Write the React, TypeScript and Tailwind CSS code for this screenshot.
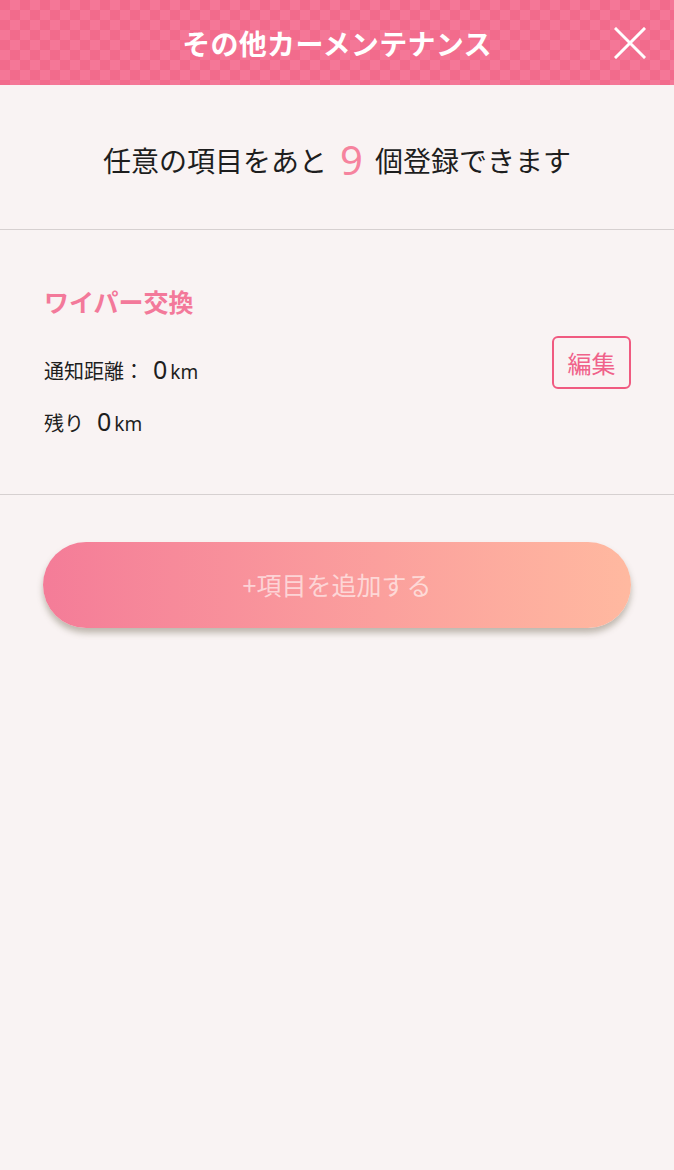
import React from 'react';

const font = "font-['Noto_Sans_CJK_JP','Noto_Sans',sans-serif]";
const latin = "font-['Noto_Sans','Noto_Sans_CJK_JP',sans-serif]";

export default function App() {
  return (
    <div className={`min-h-[1170px] w-full bg-[#f9f3f3] ${font}`}>
      {/* Header */}
      <header className="relative flex h-[85px] items-center justify-center bg-[#f26b8c] bg-[image:repeating-conic-gradient(#f47797_0_25%,#f26b8c_0_50%)] bg-size-[20px_20px]">
        <h1 className="text-[28px] font-bold tracking-[0.3px] text-white">その他カーメンテナンス</h1>
        <button className="absolute right-[28px] top-[27px] h-[32px] w-[32px]">
          <svg viewBox="0 0 32 32" className="h-full w-full" stroke="white" strokeWidth="3" strokeLinecap="square">
            <path d="M2 2 L30 30 M30 2 L2 30" />
          </svg>
        </button>
      </header>

      {/* Remaining count */}
      <section className="flex h-[145px] items-center justify-center border-b border-[#d6d0d0] pt-[6px]">
        <p className="flex items-center text-[28px] text-[#1e1e1e]">
          <span>任意の項目をあと</span>
          <span className={`ml-[13px] mr-[12px] text-[40px] leading-none text-[#f6839e] ${latin}`}>9</span>
          <span>個登録できます</span>
        </p>
      </section>

      {/* Item */}
      <section className="flex h-[265px] items-start justify-between border-b border-[#d6d0d0] pl-[44px] pr-[43px] pt-[56px]">
        <div className="flex flex-col">
          <h2 className="text-[25px] font-bold leading-[30px] text-[#f3799a]">ワイパー交換</h2>
          <div className="mt-[40px] flex items-baseline text-[#1e1e1e]">
            <span className="text-[20px]">通知距離：</span>
            <span className={`ml-[9px] text-[25px] leading-none ${latin}`}>0</span>
            <span className={`ml-[3px] text-[19px] ${latin}`}>km</span>
          </div>
          <div className="mt-[21px] flex items-baseline text-[#1e1e1e]">
            <span className="text-[20px]">残り</span>
            <span className={`ml-[13px] text-[25px] leading-none ${latin}`}>0</span>
            <span className={`ml-[3px] text-[19px] ${latin}`}>km</span>
          </div>
        </div>
        <button className="mt-[50px] flex h-[53px] w-[79px] items-center justify-center rounded-[6px] border-2 border-[#f05a80] text-[24px] text-[#f0628a]">
          編集
        </button>
      </section>

      {/* Add button */}
      <div className="px-[43px] pt-[47px]">
        <button className="flex h-[86px] w-full items-center justify-center rounded-full bg-linear-to-r from-[#f47c98] to-[#ffb9a0] text-[25px] text-white/60 shadow-[0_5px_6px_rgba(120,110,90,0.45)]">
          +項目を追加する
        </button>
      </div>
    </div>
  );
}
